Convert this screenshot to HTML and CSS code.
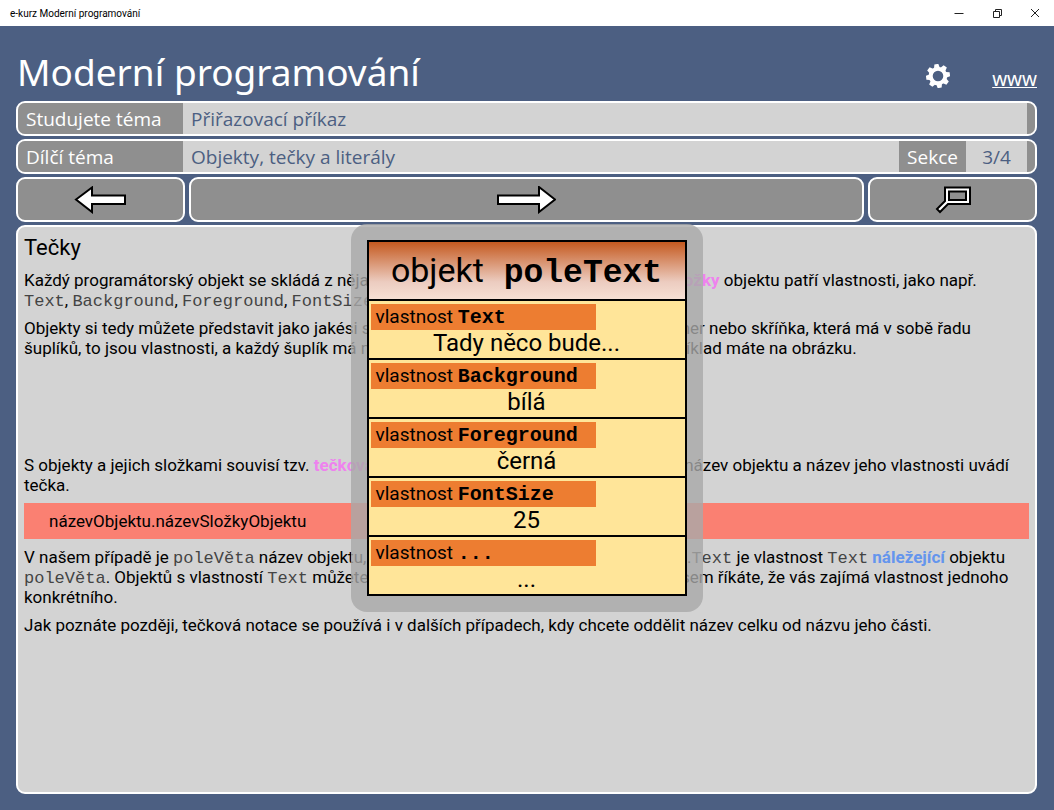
FILE: index.html
```
<!DOCTYPE html>
<html lang="cs">
<head>
    <meta charset="UTF-8">
    <meta name="viewport" content="width=device-width, initial-scale=1.0">
    <title>e-kurz Moderní programování</title>
    <link rel="stylesheet" href="styles.css">
</head>
<body>
    <div class="titlebar">
        <span class="titlebar-text">e-kurz Moderní programování</span>
        <div class="window-controls">
            <button type="button" aria-label="Minimalizovat">
                <svg width="10" height="10" viewBox="0 0 10 10"><path d="M0.5 5.5h9" /></svg>
            </button>
            <button type="button" aria-label="Obnovit">
                <svg width="10" height="10" viewBox="0 0 10 10"><path d="M1.5 3.5h6v6h-6zM3.5 3.5v-2h6v6h-2" /></svg>
            </button>
            <button type="button" aria-label="Zavřít">
                <svg width="10" height="10" viewBox="0 0 10 10"><path d="M1 1l8 8M9 1l-8 8" /></svg>
            </button>
        </div>
    </div>

    <header class="header">
        <h1>Moderní programování</h1>
        <button type="button" class="settings" aria-label="Nastavení">
            <svg width="24" height="24" viewBox="0 0 24 24">
                <circle cx="12" cy="12" r="7.3" fill="none" stroke="#fff" stroke-width="4" />
                <g fill="#fff">
                    <path id="tooth" d="M9.2 3.6L10 0h4l.8 3.6z" transform="rotate(-8 12 12)" />
                    <use href="#tooth" transform="rotate(45 12 12)" />
                    <use href="#tooth" transform="rotate(90 12 12)" />
                    <use href="#tooth" transform="rotate(135 12 12)" />
                    <use href="#tooth" transform="rotate(180 12 12)" />
                    <use href="#tooth" transform="rotate(225 12 12)" />
                    <use href="#tooth" transform="rotate(270 12 12)" />
                    <use href="#tooth" transform="rotate(315 12 12)" />
                </g>
            </svg>
        </button>
        <a class="www" href="#">www</a>
    </header>

    <main>
        <div class="bar">
            <span class="bar-label">Studujete téma</span>
            <span class="bar-value">Přiřazovací příkaz</span>
            <span class="bar-end"></span>
        </div>
        <div class="bar">
            <span class="bar-label">Dílčí téma</span>
            <span class="bar-value">Objekty, tečky a literály</span>
            <span class="bar-section">Sekce</span>
            <span class="bar-count">3/4</span>
            <span class="bar-end"></span>
        </div>

        <nav class="buttons">
            <button type="button" aria-label="Zpět">
                <svg width="52" height="28" viewBox="0 0 52 28"><path d="M2 13.500L18 1.500V9.500H51V18H18V26Z" /></svg>
            </button>
            <button type="button" aria-label="Další">
                <svg width="60" height="28" viewBox="0 0 60 28"><path d="M59 13.500L43 1V9.500H2V18H43V26Z" /></svg>
            </button>
            <button type="button" aria-label="Lupa">
                <svg width="36" height="28" viewBox="0 0 36 28">
                    <path d="M10 1.500H35V18H13L5 26L2 23L10 15Z" />
                    <path class="glass" d="M14 5.500H31V14H14Z" />
                </svg>
            </button>
        </nav>

        <article class="content">
            <h2>Tečky</h2>
            <p>Každý programátorský objekt se skládá z nějakých částí, říká se jim i složky. Mezi tyto <b class="term">složky</b> objektu patří vlastnosti, jako např.<br><code>Text</code>, <code>Background</code>, <code>Foreground</code>, <code>FontSize</code>.</p>
            <p>Objekty si tedy můžete představit jako jakési své větší úložné prostory, třeba jako kontejner nebo skříňka, která má v sobě řadu<br>šuplíků, to jsou vlastnosti, a každý šuplík má nějaký obsah, což je jen hodnota. Takový příklad máte na obrázku.</p>
            <div class="figure-space"></div>
            <p>S objekty a jejich složkami souvisí tzv. <b class="term">tečková notace</b>. Při ní se v celém programu mezi název objektu a název jeho vlastnosti uvádí<br>tečka.</p>
            <div class="syntax">názevObjektu.názevSložkyObjektu</div>
            <p>V našem případě je <code>poleVěta</code> název objektu, takže v programu zápis tečkou <code>poleVěta</code>.<code>Text</code> je vlastnost <code>Text</code> <b class="link">náležející</b> objektu<br><code>poleVěta</code>. Objektů s vlastností <code>Text</code> můžete mít v programu vždy více a tak tímto zápisem říkáte, že vás zajímá vlastnost jednoho<br>konkrétního.</p>
            <p>Jak poznáte později, tečková notace se používá i v dalších případech, kdy chcete oddělit název celku od názvu jeho části.</p>

            <aside class="popup">
                <div class="object">
                    <div class="object-name">objekt<b> poleText</b></div>
                    <div class="property">
                        <div class="property-name">vlastnost <b>Text</b></div>
                        <div class="property-value">Tady něco bude...</div>
                    </div>
                    <div class="property">
                        <div class="property-name">vlastnost <b>Background</b></div>
                        <div class="property-value">bílá</div>
                    </div>
                    <div class="property">
                        <div class="property-name">vlastnost <b>Foreground</b></div>
                        <div class="property-value">černá</div>
                    </div>
                    <div class="property">
                        <div class="property-name">vlastnost <b>FontSize</b></div>
                        <div class="property-value">25</div>
                    </div>
                    <div class="property">
                        <div class="property-name">vlastnost <b>...</b></div>
                        <div class="property-value">...</div>
                    </div>
                </div>
            </aside>
        </article>
    </main>
</body>
</html>
```
FILE: styles.css
```
* {
    box-sizing: border-box;
}

body {
    background-color: #4c5f82;
    color: #000;
    font-family: 'Noto Sans', 'Open Sans', sans-serif;
    margin: 0;
    min-height: 100vh;
    display: flex;
    flex-direction: column;
}

button {
    background: none;
    border: none;
    padding: 0;
    cursor: pointer;
}

svg {
    display: block;
}

.titlebar {
    background-color: #fff;
    height: 26px;
    padding-left: 10px;
    display: flex;
    align-items: center;
    justify-content: space-between;
}

.titlebar-text {
    font-family: Roboto, sans-serif;
    font-size: 10px;
}

.window-controls {
    display: flex;
}

.window-controls button {
    width: 38px;
    height: 26px;
    display: flex;
    align-items: center;
    justify-content: center;
}

.window-controls path {
    fill: none;
    stroke: #222;
}

.header {
    color: #fff;
    height: 75px;
    padding: 0 17px;
    display: flex;
    align-items: center;
}

h1 {
    font-size: 37px;
    font-weight: normal;
    line-height: 50px;
    margin: 0;
    padding-top: 16px;
    flex-grow: 1;
}

.settings {
    margin: 24px 42px 0 0;
}

.www {
    color: #fff;
    font-size: 19px;
    margin-top: 30px;
}

main {
    padding: 0 17px 16px 16px;
    flex-grow: 1;
    display: flex;
    flex-direction: column;
    gap: 3px;
}

.bar {
    background-color: #d3d3d3;
    border: 2px solid #fff;
    border-radius: 9px;
    height: 35px;
    font-family: 'Open Sans', sans-serif;
    font-size: 19px;
    line-height: 33px;
    display: flex;
    overflow: hidden;
}

.bar-label {
    background-color: #8f8f8f;
    color: #fff;
    width: 165px;
    padding-left: 8px;
}

.bar-value {
    color: #4c5f82;
    padding-left: 8px;
    flex-grow: 1;
}

.bar-section {
    background-color: #8f8f8f;
    color: #fff;
    width: 67px;
    text-align: center;
}

.bar-count {
    color: #4c5f82;
    width: 61px;
    text-align: center;
}

.bar-end {
    background-color: #8f8f8f;
    width: 8px;
}

.buttons {
    display: grid;
    grid-template-columns: 1fr 4fr 1fr;
    gap: 4px;
}

.buttons button {
    background-color: #8f8f8f;
    border: 2px solid #fff;
    border-radius: 9px;
    height: 45px;
    display: flex;
    align-items: center;
    justify-content: center;
}

.buttons path {
    fill: #fff;
    stroke: #000;
    stroke-width: 2;
}

.buttons .glass {
    fill: #8f8f8f;
}

.content {
    position: relative;
    background-color: #d3d3d3;
    border: 2px solid #fff;
    border-radius: 9px;
    padding: 6px;
    flex-grow: 1;
    font-family: Roboto, sans-serif;
    font-size: 17px;
    line-height: 20px;
}

h2 {
    font-size: 22px;
    font-weight: normal;
    line-height: 29px;
    margin: 0;
}

p {
    margin: 8px 0;
}

code {
    color: #444;
    font-family: 'Liberation Mono', monospace;
    font-size: 17px;
    line-height: 1;
}

.term {
    color: #ee82ee;
}

.link {
    color: #6495ed;
}

/* room for the picture of the object */
.figure-space {
    height: 81px;
}

.syntax {
    background-color: #fa8072;
    line-height: 36px;
    padding-left: 25px;
}

.popup {
    position: absolute;
    top: -3px;
    left: 50%;
    transform: translateX(-50%);
    background-color: rgba(169, 169, 169, 0.8);
    border-radius: 16px;
    padding: 16px;
}

.object {
    background-color: #ffe599;
    border: 2px solid #000;
    width: 320px;
}

.object-name {
    background: linear-gradient(#c55a20, #ecccc0 70%, #f6e0d4);
    font-size: 34px;
    line-height: 57px;
    text-align: center;
}

.object b {
    font-family: 'Liberation Mono', monospace;
    line-height: 1;
}

.object-name b {
    font-size: 33px;
}

.property {
    border-top: 2px solid #000;
    padding: 3px 2px 1px;
}

.property-name {
    background-color: #ed7d31;
    width: 225px;
    padding-left: 5px;
    font-size: 19px;
    line-height: 26px;
}

.property-name b {
    font-size: 20px;
}

.property-value {
    font-size: 24px;
    line-height: 27px;
    text-align: center;
}
```
